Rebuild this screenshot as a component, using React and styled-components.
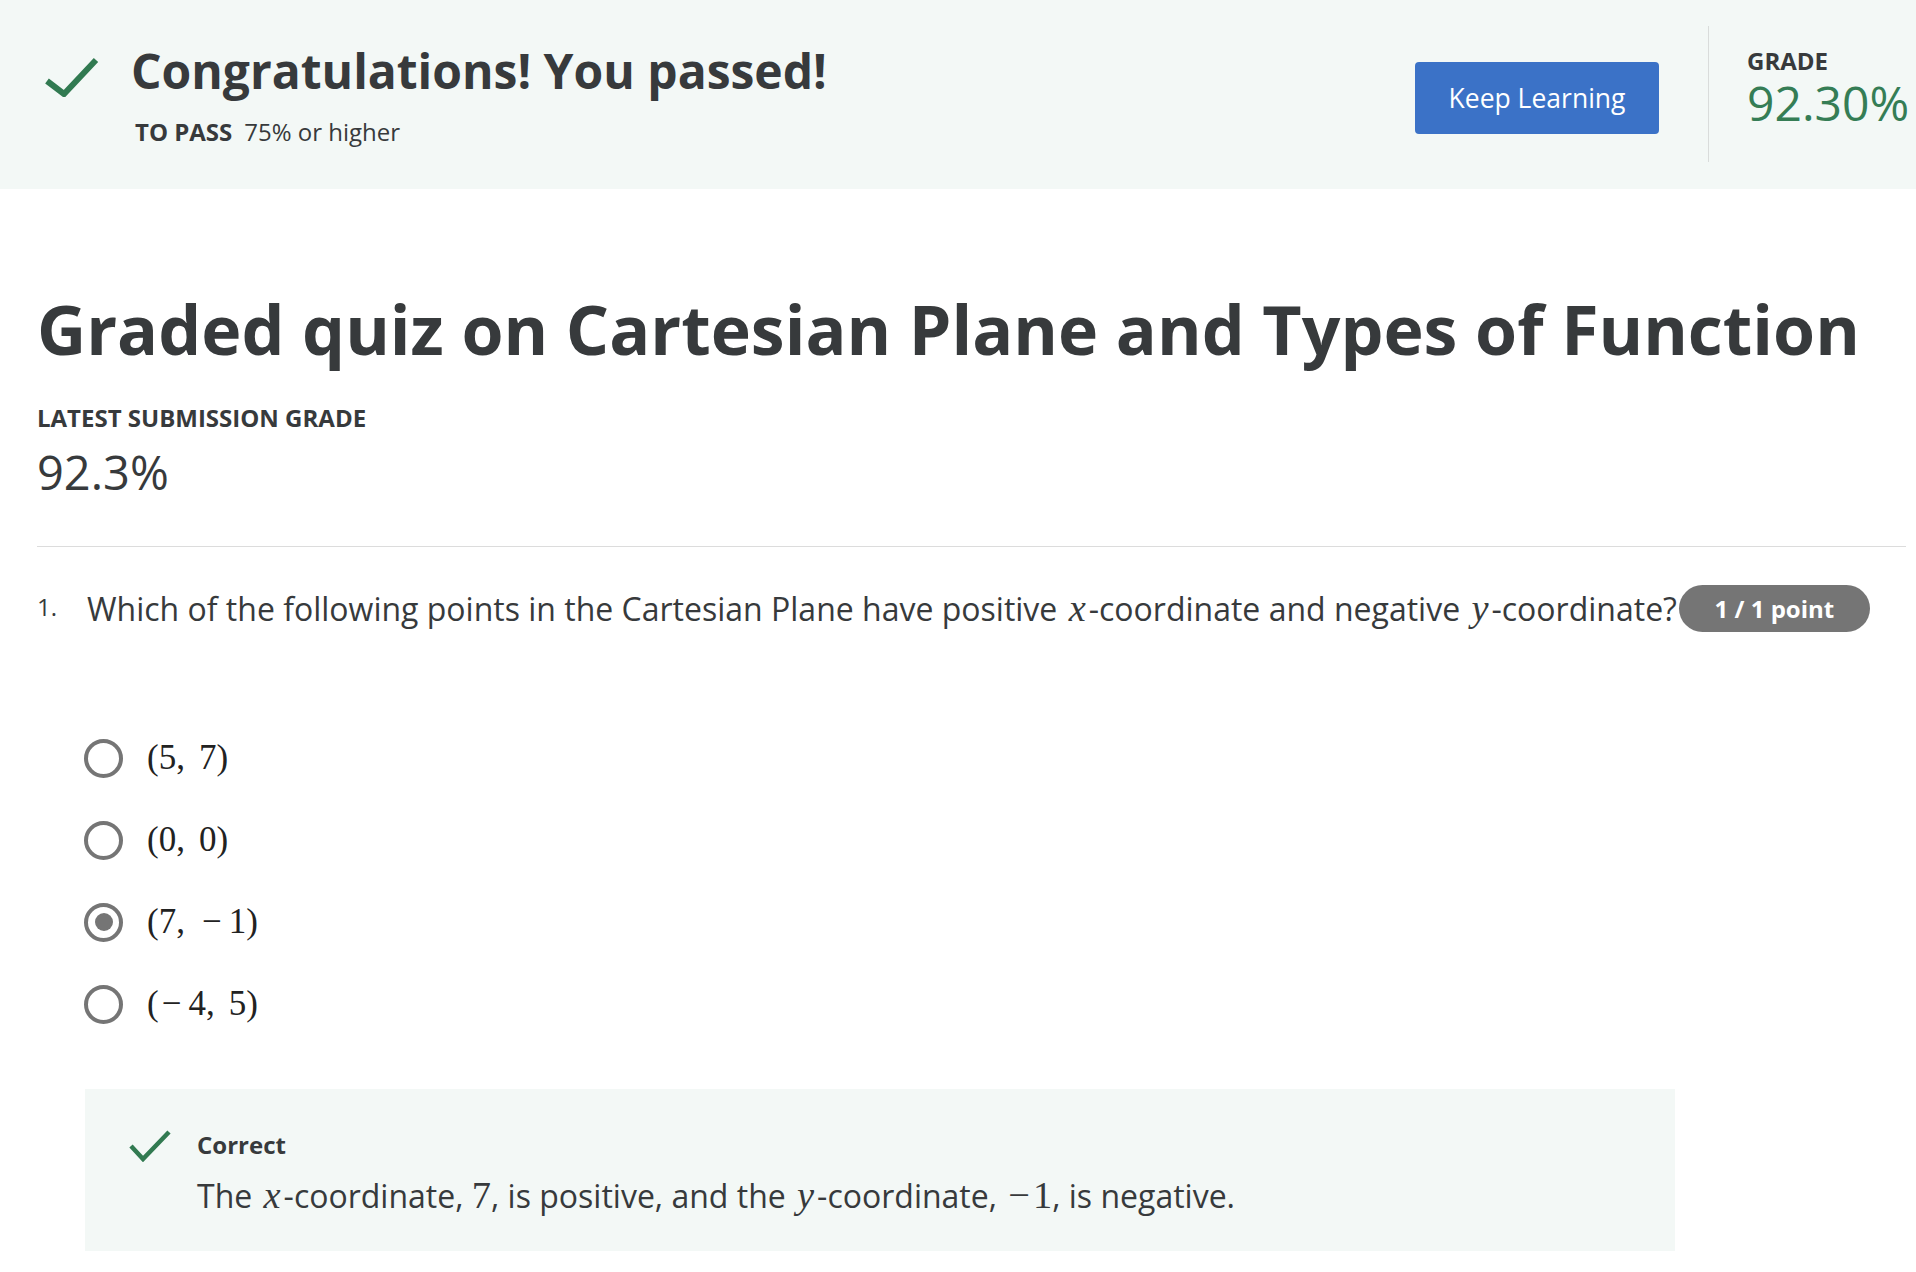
import React from 'react';
import styled, { createGlobalStyle } from 'styled-components';

const GlobalStyle = createGlobalStyle`
    body {
        margin: 0;
        background: #ffffff;
        font-family: 'Open Sans', 'Noto Sans', sans-serif;
        color: #373a3c;
    }
`

const Banner = styled.header`
    height: 189px;
    background: #f3f8f6;
    display: flex;
    justify-content: space-between;
    align-items: flex-start;
    padding-left: 45px;
    box-sizing: border-box;
`

const BannerLeft = styled.div`
    display: flex;
    align-items: flex-start;
    gap: 32px;
    padding-top: 42px;
`

const CheckMark = styled.svg`
    flex: none;
    margin-top: ${p => p.$offset || 0}px;
`

const BannerText = styled.div`
    display: flex;
    flex-direction: column;
`

const BannerTitle = styled.h1`
    margin: 0;
    font-size: 48px;
    line-height: 58px;
    font-weight: 700;
    color: #373a3c;
`

const PassLine = styled.div`
    margin-top: 17px;
    padding-left: 4px;
    font-size: 24px;
    line-height: 30px;
    color: #373a3c;

    b {
        font-weight: 700;
        margin-right: 12px;
    }
`

const BannerRight = styled.div`
    display: flex;
    align-items: flex-start;
`

const KeepButton = styled.button`
    margin-top: 62px;
    margin-right: 49px;
    width: 244px;
    height: 72px;
    border: none;
    border-radius: 4px;
    background: #3b72c7;
    color: #ffffff;
    font-family: 'Open Sans', sans-serif;
    font-size: 26.5px;
    cursor: pointer;
`

const VDivider = styled.div`
    margin-top: 26px;
    margin-right: 38px;
    width: 1px;
    height: 136px;
    background: #d9dcdb;
`

const GradeBlock = styled.div`
    width: 169px;
    margin-top: 49px;
`

const GradeLabel = styled.div`
    font-size: 24px;
    line-height: 23px;
    font-weight: 700;
    color: #373a3c;
`

const GradeValue = styled.div`
    font-size: 48px;
    line-height: 62px;
    color: #357d55;
`

const Main = styled.main`
    padding: 99px 10px 40px 37px;
`

const QuizTitle = styled.h2`
    margin: 0;
    font-size: 68px;
    line-height: 82px;
    font-weight: 700;
    color: #373a3c;
    white-space: nowrap;
`

const SubLabel = styled.div`
    margin-top: 33px;
    font-size: 24px;
    line-height: 30px;
    font-weight: 700;
`

const SubValue = styled.div`
    margin-top: 11px;
    font-size: 47px;
    line-height: 56px;
`

const Rule = styled.hr`
    margin: 46px 0 0;
    border: none;
    height: 1px;
    background: #dcdcdc;
`

const QuestionRow = styled.div`
    margin-top: 38px;
    display: flex;
    align-items: center;
`

const QNum = styled.span`
    width: 50px;
    flex: none;
    font-size: 24px;
    line-height: 44px;
    align-self: flex-start;
`

const QText = styled.span`
    font-size: 32px;
    line-height: 44px;
    white-space: nowrap;
`

const Var = styled.span`
    font-family: 'Liberation Serif', 'Times New Roman', serif;
    font-style: italic;
    font-size: 1.2em;
    line-height: 1;
    padding: 0 3px;
`

const Num = styled.span`
    font-family: 'Liberation Serif', 'Times New Roman', serif;
    font-size: 1.2em;
    line-height: 1;
`

const PointBadge = styled.span`
    flex: none;
    width: 191px;
    height: 47px;
    margin-left: 2px;
    border-radius: 24px;
    background: #757575;
    color: #ffffff;
    font-size: 24px;
    font-weight: 700;
    display: flex;
    align-items: center;
    justify-content: center;
`

const Options = styled.div`
    margin-top: 96px;
    padding-left: 47px;
    display: flex;
    flex-direction: column;
    gap: 22px;
`

const OptionRow = styled.label`
    height: 60px;
    display: flex;
    align-items: center;
    gap: 24px;
`

const Radio = styled.span`
    width: 39px;
    height: 39px;
    box-sizing: border-box;
    border: 4px solid #757575;
    border-radius: 50%;
    display: flex;
    align-items: center;
    justify-content: center;

    &::after {
        content: '';
        width: 18px;
        height: 18px;
        border-radius: 50%;
        background: ${p => (p.$checked ? '#757575' : 'transparent')};
    }
`

const MathText = styled.span`
    font-family: 'Liberation Serif', 'Times New Roman', serif;
    font-size: 35px;
    color: #222;

    i {
        display: inline-block;
        width: 0.4em;
    }

    em {
        font-style: normal;
        padding: 0 7px 0 3px;
    }
`

const Feedback = styled.div`
    margin: 55px 0 0 48px;
    width: 1590px;
    box-sizing: border-box;
    background: #f3f8f6;
    padding: 41px 44px 35px 44px;
    display: flex;
    gap: 26px;
`

const FeedbackBody = styled.div`
    display: flex;
    flex-direction: column;
`

const FeedbackTitle = styled.div`
    font-size: 24px;
    line-height: 30px;
    font-weight: 700;
`

const FeedbackText = styled.div`
    margin-top: 16px;
    font-size: 32px;
    line-height: 40px;

    em {
        font-style: normal;
        padding: 0 3px;
    }
`

const Check = ({ width, height, points, stroke, offset }) => (
    <CheckMark width={width} height={height} viewBox={`0 0 ${width} ${height}`} $offset={offset}>
        <polyline points={points} fill="none" stroke="#317a51" strokeWidth={stroke} />
    </CheckMark>
)

const Minus = () => <em>{'\u2212'}</em>

const options = [
    { first: <>(5,</>, second: <>7)</>, checked: false },
    { first: <>(0,</>, second: <>0)</>, checked: false },
    { first: <>(7,</>, second: <><Minus />1)</>, checked: true },
    { first: <>(<Minus />4,</>, second: <>5)</>, checked: false },
]

export default function App() {
    return (
        <>
            <GlobalStyle />
            <Banner>
                <BannerLeft>
                    <Check width={54} height={40} points="2,24 19,37 51,3" stroke={6} offset={15} />
                    <BannerText>
                        <BannerTitle>Congratulations! You passed!</BannerTitle>
                        <PassLine><b>TO PASS</b>75% or higher</PassLine>
                    </BannerText>
                </BannerLeft>
                <BannerRight>
                    <KeepButton>Keep Learning</KeepButton>
                    <VDivider />
                    <GradeBlock>
                        <GradeLabel>GRADE</GradeLabel>
                        <GradeValue>92.30%</GradeValue>
                    </GradeBlock>
                </BannerRight>
            </Banner>
            <Main>
                <QuizTitle>Graded quiz on Cartesian Plane and Types of Function</QuizTitle>
                <SubLabel>LATEST SUBMISSION GRADE</SubLabel>
                <SubValue>92.3%</SubValue>
                <Rule />
                <QuestionRow>
                    <QNum>1.</QNum>
                    <QText>
                        Which of the following points in the Cartesian Plane have positive <Var>x</Var>-coordinate and negative <Var>y</Var>-coordinate?
                    </QText>
                    <PointBadge>1 / 1 point</PointBadge>
                </QuestionRow>
                <Options>
                    {options.map((o, i) => (
                        <OptionRow key={i}>
                            <Radio $checked={o.checked} />
                            <MathText>{o.first}<i />{o.second}</MathText>
                        </OptionRow>
                    ))}
                </Options>
                <Feedback>
                    <Check width={42} height={32} points="2,16 14,29 40,2" stroke={4.5} />
                    <FeedbackBody>
                        <FeedbackTitle>Correct</FeedbackTitle>
                        <FeedbackText>
                            The <Var>x</Var>-coordinate, <Num>7</Num>, is positive, and the <Var>y</Var>-coordinate, <Num><Minus />1</Num>, is negative.
                        </FeedbackText>
                    </FeedbackBody>
                </Feedback>
            </Main>
        </>
    );
}
